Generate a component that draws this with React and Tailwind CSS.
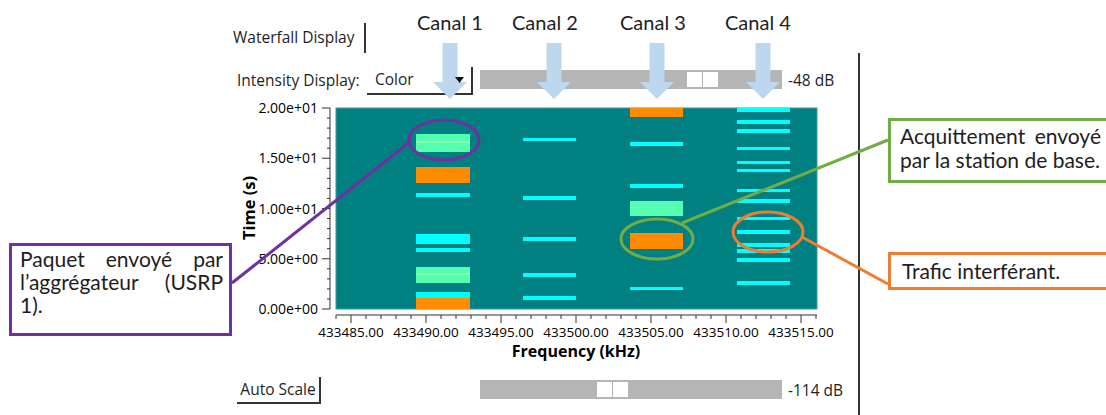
import React from 'react';

const COL = { c: '#00ffff', g: '#55ffb2', o: '#ff8c00' };

// bars per channel: [top, bottom, colour]
const channels = [
  {
    x: 416,
    w: 54,
    bars: [
      [134, 152, 'g'],
      [167, 183, 'o'],
      [193, 197, 'c'],
      [234, 244, 'c'],
      [248, 252, 'c'],
      [267, 283, 'g'],
      [292, 298, 'c'],
      [298, 309, 'o'],
    ],
  },
  {
    x: 523,
    w: 53,
    bars: [
      [138, 141, 'c'],
      [196, 200, 'c'],
      [237, 241, 'c'],
      [273, 277, 'c'],
      [296, 300, 'c'],
    ],
  },
  {
    x: 630,
    w: 53,
    bars: [
      [108, 117, 'o'],
      [142, 146, 'c'],
      [184, 188, 'c'],
      [201, 216, 'g'],
      [233, 249, 'o'],
      [287, 290, 'c'],
    ],
  },
  {
    x: 737,
    w: 53,
    bars: [
      [108, 112, 'c'],
      [120, 124, 'c'],
      [129, 133, 'c'],
      [147, 150, 'c'],
      [161, 164, 'c'],
      [169, 172, 'c'],
      [189, 192, 'c'],
      [199, 203, 'c'],
      [217, 220, 'c'],
      [230, 234, 'c'],
      [243, 247, 'c'],
      [249, 253, 'c'],
      [258, 262, 'c'],
      [281, 285, 'c'],
    ],
  },
];

const arrows = [450, 554, 657, 763];
const canals = [
  { label: 'Canal 1', left: 417 },
  { label: 'Canal 2', left: 512 },
  { label: 'Canal 3', left: 620 },
  { label: 'Canal 4', left: 725 },
];

function Slider({ offset }) {
  return (
    <div className="w-[302px] h-[19px] bg-[#b5b5b5] flex items-center" style={{ paddingLeft: offset }}>
      <div className="flex gap-px">
        <div className="w-[15px] h-[15px] bg-white" />
        <div className="w-[15px] h-[15px] bg-white" />
      </div>
    </div>
  );
}

function Waterfall() {
  const yTicks = Array.from({ length: 21 }, (_, t) => ({ y: 309 - t * 10.05, major: t % 5 === 0, t }));
  const xTicks = Array.from({ length: 33 }, (_, i) => ({ x: 336 + i * 15, major: (i - 1) % 5 === 0 }));
  const yLabels = ['0.00e+00', '5.00e+00', '1.00e+01', '1.50e+01', '2.00e+01'];

  return (
    <svg width="620" height="266" viewBox="236 96 620 266" className="block font-['Open_Sans',sans-serif] text-[#1e1e1e]">
      <rect x="336" y="108" width="481" height="201" fill="#008080" stroke="#3a9a9a" strokeWidth="1" />
      {channels.map((ch, ci) =>
        ch.bars.map(([t, b, c], bi) => (
          <g key={`${ci}-${bi}`}>
            <rect x={ch.x} y={t} width={ch.w} height={b - t} fill={COL[c]} />
            {c === 'g' && (
              <line x1={ch.x} x2={ch.x + ch.w} y1={(t + b) / 2 - 1} y2={(t + b) / 2 - 1} stroke="#b9ff9c" strokeWidth="1" />
            )}
          </g>
        ))
      )}

      {/* y axis */}
      <line x1="330" y1="108" x2="330" y2="309" stroke="#333" strokeWidth="1" />
      {yTicks.map(({ y, major, t }) => (
        <line key={t} x1={major ? 322 : 327} x2="330" y1={y} y2={y} stroke="#333" strokeWidth="1" />
      ))}
      {yLabels.map((l, i) => (
        <text key={l} x="318" y={309 - i * 50.25 + 5} textAnchor="end" fontSize="14" fontWeight="500">
          {l}
        </text>
      ))}
      <text x="255" y="208" transform="rotate(-90 255 208)" textAnchor="middle" fontSize="16.5" fontWeight="700">
        Time (s)
      </text>

      {/* x axis */}
      <line x1="336" y1="315" x2="817" y2="315" stroke="#333" strokeWidth="1" />
      {xTicks.map(({ x, major }) => (
        <line key={x} x1={x} x2={x} y1="315" y2={major ? 323 : 319} stroke="#333" strokeWidth="1" />
      ))}
      {Array.from({ length: 7 }, (_, k) => (
        <text key={k} x={351 + 75 * k} y="337" textAnchor="middle" fontSize="13.5" fontWeight="500">
          {433485 + 5 * k}.00
        </text>
      ))}
      <text x="576" y="357" textAnchor="middle" fontSize="16" fontWeight="700">
        Frequency (kHz)
      </text>
    </svg>
  );
}

export default function App() {
  return (
    <div className="relative w-[1106px] h-[415px] bg-white overflow-hidden font-['Open_Sans',sans-serif] font-medium text-[#1e1e1e]">
      <div className="flex pl-[230px]">
        <div className="w-[630px] flex flex-col">
          {/* Tab */}
          <div className="h-[53px] flex items-end">
            <div className="w-[136px] h-[30px] pl-[3px] border-r-2 border-[#333] flex items-center text-[15.5px]">
              Waterfall Display
            </div>
          </div>

          {/* Body */}
          <div className="h-[362px] border-r-2 border-[#333] flex flex-col">
            <div className="mt-[14px] h-[28px] flex items-start pl-[7px]">
              <div className="w-[130px] h-[28px] flex items-center text-[15.5px]">Intensity Display:</div>
              <div className="w-[106px] h-[28px] pl-[8px] pr-[7px] border-r-2 border-b-2 border-[#333] flex items-center justify-between text-[15.5px]">
                <span>Color</span>
                <svg className="relative z-10" width="9" height="6" viewBox="0 0 9 6">
                  <polygon points="0,0 9,0 4.5,6" fill="#111" />
                </svg>
              </div>
              <div className="ml-[7px] mt-[3px]">
                <Slider offset={207} />
              </div>
              <div className="ml-[6px] h-[28px] flex items-center text-[15.5px]">-48 dB</div>
            </div>

            <div className="mt-[1px] ml-[6px]">
              <Waterfall />
            </div>

            <div className="mt-[15px] h-[27px] flex items-start pl-[7px]">
              <div className="w-[84px] h-[27px] border-r-2 border-b-2 border-[#333] flex items-center justify-center text-[15.5px]">
                Auto Scale
              </div>
              <div className="ml-[159px] mt-[3px]">
                <Slider offset={117} />
              </div>
              <div className="ml-[6px] h-[27px] flex items-center text-[15.5px]">-114 dB</div>
            </div>
          </div>
        </div>
      </div>

      {/* Annotation overlay: arrows, ellipses, connectors */}
      <svg className="absolute inset-0 pointer-events-none" width="1106" height="415" viewBox="0 0 1106 415">
        {arrows.map((cx) => (
          <polygon
            key={cx}
            points={`${cx - 7.5},43 ${cx + 7.5},43 ${cx + 7.5},82 ${cx + 17},82 ${cx},99 ${cx - 17},82 ${cx - 7.5},82`}
            fill="#bdd7ee"
          />
        ))}
        <g fill="none" strokeWidth="3">
          <ellipse cx="444" cy="140" rx="35" ry="20" stroke="#7030a0" />
          <line x1="232" y1="283" x2="411" y2="141" stroke="#7030a0" />
          <ellipse cx="657" cy="239" rx="36" ry="20" stroke="#70ad47" />
          <line x1="682" y1="223" x2="888" y2="140" stroke="#70ad47" />
          <ellipse cx="768" cy="232" rx="35" ry="20" stroke="#ed7d31" />
          <line x1="802" y1="237" x2="888" y2="284" stroke="#ed7d31" />
        </g>
      </svg>

      {/* Canal labels */}
      {canals.map((c) => (
        <div key={c.label} className="absolute top-[8px] font-['Lato',sans-serif] font-normal text-[20px] leading-[28px]" style={{ left: c.left }}>
          {c.label}
        </div>
      ))}

      {/* Callout boxes */}
      <div className="absolute left-[9px] top-[243px] w-[223px] h-[93px] border-[3px] border-[#7030a0] bg-white pl-[8px] pr-[6px] pt-[1px] font-['Lato',sans-serif] font-normal text-[21px] leading-[23px]">
        <div className="text-justify [text-align-last:justify]">Paquet envoyé par</div>
        <div className="text-justify [text-align-last:justify]">l’aggrégateur (USRP</div>
        <div>1).</div>
      </div>

      <div className="absolute left-[888px] top-[118px] w-[240px] h-[65px] border-[3px] border-[#70ad47] bg-white pl-[9px] pt-[3px] font-['Lato',sans-serif] font-normal text-[21px] leading-[24px]">
        <div className="w-[201px] text-justify [text-align-last:justify]">Acquittement envoyé</div>
        <div>par la station de base.</div>
      </div>

      <div className="absolute left-[888px] top-[252px] w-[240px] h-[38px] border-[3px] border-[#ed7d31] bg-white pl-[11px] flex items-center font-['Lato',sans-serif] font-normal text-[21px]">
        Trafic interférant.
      </div>
    </div>
  );
}
